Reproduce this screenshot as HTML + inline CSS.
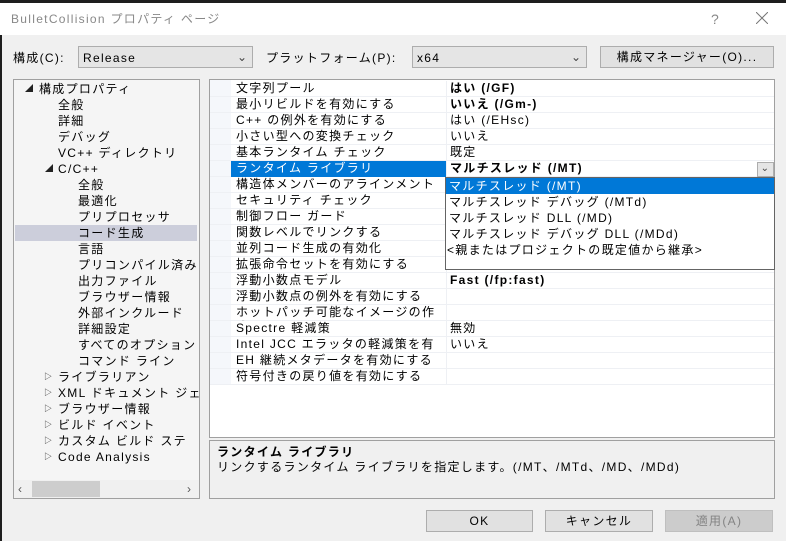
<!DOCTYPE html>
<html><head><meta charset="utf-8"><style>
*{margin:0;padding:0;box-sizing:border-box}
body{width:786px;height:541px;background:#f0f0f0;font-family:"Liberation Sans","Noto Sans CJK JP",sans-serif;font-size:12px;letter-spacing:1.3px;color:#000;position:relative;overflow:hidden}
.a{position:absolute;white-space:nowrap;line-height:16px}
.title{position:absolute;left:0;top:0;width:786px;height:35px;background:#fff;border-top:3px solid #1e1e1e}
.box{position:absolute;border:1px solid #a0a0a0}
.btn{position:absolute;background:#e1e1e1;border:1px solid #adadad;text-align:center;line-height:20px}
.row{position:absolute;left:0;width:565px;height:16px;border-bottom:1px solid #eef0f4}
.row .n{position:absolute;left:21px;width:216px;height:16px;line-height:15px;padding-left:5px;overflow:hidden;border-right:1px solid #eef0f4}
.row .v{position:absolute;left:237px;line-height:15px;padding-left:3px}
.t{position:absolute;line-height:16px;white-space:nowrap}
.tri{position:absolute;font-size:8px;color:#222;line-height:16px}
.dd div{height:16px;line-height:16px;padding-left:3px}
</style></head><body>
<div style="position:absolute;left:0;top:0;width:2px;height:541px;background:#1e1e1e"></div>
<div class="title"><span class="a" style="left:11px;top:8px;color:#888">BulletCollision プロパティ ページ</span>
<span class="a" style="left:711px;top:8px;color:#888;font-size:14px">?</span>
<svg style="position:absolute;left:756px;top:9px" width="12" height="12"><path d="M0 0L12 12M12 0L0 12" stroke="#777" stroke-width="1"/></svg></div>

<span class="a" style="left:13px;top:50px">構成(C):</span>
<div class="box" style="left:78px;top:46px;width:175px;height:22px;background:#e5e5e5;border-color:#adadad"><span class="a" style="left:4px;top:3px">Release</span><span class="a" style="left:158px;top:2px;color:#444">⌄</span></div>
<span class="a" style="left:266px;top:50px">プラットフォーム(P):</span>
<div class="box" style="left:412px;top:46px;width:175px;height:22px;background:#e5e5e5;border-color:#adadad"><span class="a" style="left:4px;top:3px">x64</span><span class="a" style="left:158px;top:2px;color:#444">⌄</span></div>
<div class="btn" style="left:600px;top:46px;width:174px;height:22px">構成マネージャー(O)...</div>

<div class="box" style="left:13px;top:79px;width:187px;height:420px;background:#f5f5f5;overflow:hidden">
<div style="position:absolute;left:1px;top:145px;width:182px;height:16px;background:#cccedb"></div>
<span class="tri" style="left:11px;top:1px">◢</span><span class="t" style="left:25px;top:1px">構成プロパティ</span>
<span class="t" style="left:44px;top:17px">全般</span>
<span class="t" style="left:44px;top:33px">詳細</span>
<span class="t" style="left:44px;top:49px">デバッグ</span>
<span class="t" style="left:44px;top:65px">VC++ ディレクトリ</span>
<span class="tri" style="left:31px;top:81px">◢</span><span class="t" style="left:44px;top:81px">C/C++</span>
<span class="t" style="left:64px;top:97px">全般</span>
<span class="t" style="left:64px;top:113px">最適化</span>
<span class="t" style="left:64px;top:129px">プリプロセッサ</span>
<span class="t" style="left:64px;top:145px">コード生成</span>
<span class="t" style="left:64px;top:161px">言語</span>
<span class="t" style="left:64px;top:177px">プリコンパイル済み</span>
<span class="t" style="left:64px;top:193px">出力ファイル</span>
<span class="t" style="left:64px;top:209px">ブラウザー情報</span>
<span class="t" style="left:64px;top:225px">外部インクルード</span>
<span class="t" style="left:64px;top:241px">詳細設定</span>
<span class="t" style="left:64px;top:257px">すべてのオプション</span>
<span class="t" style="left:64px;top:273px">コマンド ライン</span>
<span class="tri" style="left:30px;top:289px">▷</span><span class="t" style="left:44px;top:289px">ライブラリアン</span>
<span class="tri" style="left:30px;top:305px">▷</span><span class="t" style="left:44px;top:305px">XML ドキュメント ジェ</span>
<span class="tri" style="left:30px;top:321px">▷</span><span class="t" style="left:44px;top:321px">ブラウザー情報</span>
<span class="tri" style="left:30px;top:337px">▷</span><span class="t" style="left:44px;top:337px">ビルド イベント</span>
<span class="tri" style="left:30px;top:353px">▷</span><span class="t" style="left:44px;top:353px">カスタム ビルド ステ</span>
<span class="tri" style="left:30px;top:369px">▷</span><span class="t" style="left:44px;top:369px">Code Analysis</span>
<div style="position:absolute;left:0;top:400px;width:185px;height:18px;background:#f0f0f0">
<span class="a" style="left:4px;top:1px;color:#555">‹</span>
<div style="position:absolute;left:18px;top:1px;width:68px;height:16px;background:#cdcdcd"></div>
<span class="a" style="left:173px;top:1px;color:#555">›</span></div>
</div>

<div class="box" style="left:209px;top:79px;width:566px;height:359px;background:#fff;overflow:hidden">
<div style="position:absolute;left:0;top:0;width:21px;height:305px;background:#f5f7fb"></div>
<div class="row" style="top:1px"><div class="n">文字列プール</div><div class="v"><b>はい (/GF)</b></div></div>
<div class="row" style="top:17px"><div class="n">最小リビルドを有効にする</div><div class="v"><b>いいえ (/Gm-)</b></div></div>
<div class="row" style="top:33px"><div class="n">C++ の例外を有効にする</div><div class="v">はい (/EHsc)</div></div>
<div class="row" style="top:49px"><div class="n">小さい型への変換チェック</div><div class="v">いいえ</div></div>
<div class="row" style="top:65px"><div class="n">基本ランタイム チェック</div><div class="v">既定</div></div>
<div class="row" style="top:81px"><div class="n" style="background:#0078d7;color:#fff">ランタイム ライブラリ</div><div class="v"><b>マルチスレッド (/MT)</b></div>
<div style="position:absolute;left:547px;top:1px;width:17px;height:15px;background:#e5e5e5;border:1px solid #adadad;font-size:10px;text-align:center;line-height:12px;color:#444">⌄</div></div>
<div class="row" style="top:97px"><div class="n">構造体メンバーのアラインメント</div></div>
<div class="row" style="top:113px"><div class="n">セキュリティ チェック</div></div>
<div class="row" style="top:129px"><div class="n">制御フロー ガード</div></div>
<div class="row" style="top:145px"><div class="n">関数レベルでリンクする</div></div>
<div class="row" style="top:161px"><div class="n">並列コード生成の有効化</div></div>
<div class="row" style="top:177px"><div class="n">拡張命令セットを有効にする</div></div>
<div class="row" style="top:193px"><div class="n">浮動小数点モデル</div><div class="v"><b>Fast (/fp:fast)</b></div></div>
<div class="row" style="top:209px"><div class="n">浮動小数点の例外を有効にする</div></div>
<div class="row" style="top:225px"><div class="n">ホットパッチ可能なイメージの作成</div></div>
<div class="row" style="top:241px"><div class="n">Spectre 軽減策</div><div class="v">無効</div></div>
<div class="row" style="top:257px"><div class="n">Intel JCC エラッタの軽減策を有効</div><div class="v">いいえ</div></div>
<div class="row" style="top:273px"><div class="n">EH 継続メタデータを有効にする</div></div>
<div class="row" style="top:289px"><div class="n">符号付きの戻り値を有効にする</div></div>
</div>

<div class="dd" style="position:absolute;left:445px;top:177px;width:330px;height:93px;background:#fff;border:1px solid #646464">
<div style="background:#0078d7;color:#fff">マルチスレッド (/MT)</div>
<div>マルチスレッド デバッグ (/MTd)</div>
<div>マルチスレッド DLL (/MD)</div>
<div>マルチスレッド デバッグ DLL (/MDd)</div>
<div style="padding-left:1px">&lt;親またはプロジェクトの既定値から継承&gt;</div>
</div>

<div class="box" style="left:209px;top:440px;width:566px;height:59px;background:#f0f0f0">
<span class="a" style="left:7px;top:3px;font-weight:bold">ランタイム ライブラリ</span>
<span class="a" style="left:7px;top:18px">リンクするランタイム ライブラリを指定します。(/MT、/MTd、/MD、/MDd)</span>
</div>

<div class="btn" style="left:426px;top:510px;width:107px;height:22px">OK</div>
<div class="btn" style="left:545px;top:510px;width:108px;height:22px">キャンセル</div>
<div class="btn" style="left:665px;top:510px;width:108px;height:22px;background:#cccccc;border-color:#bfbfbf;color:#838383">適用(A)</div>
</body></html>
